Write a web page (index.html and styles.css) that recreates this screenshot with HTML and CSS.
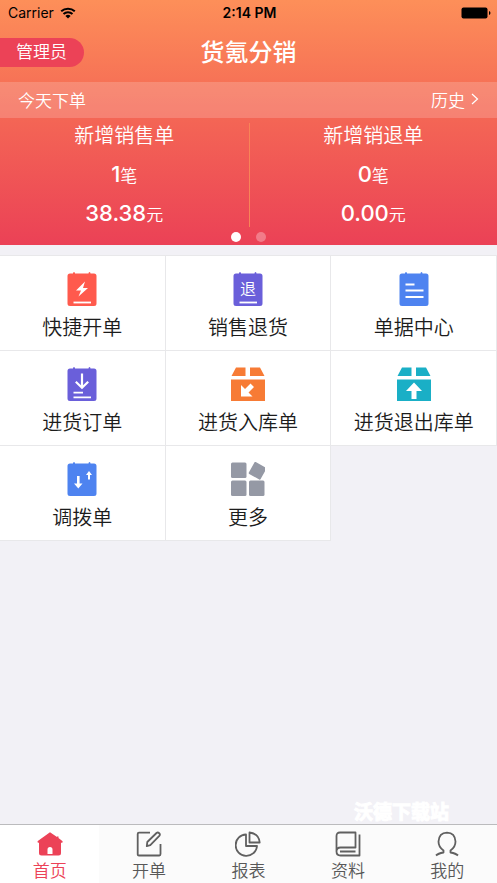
FILE: index.html
```html
<!DOCTYPE html>
<html lang="zh-CN">
<head>
<meta charset="utf-8">
<meta name="viewport" content="width=device-width, initial-scale=1">
<title>货氪分销</title>
<link rel="stylesheet" href="styles.css">
</head>
<body>
<header class="hero">
  <div class="status">
    <span class="carrier">Carrier
      <svg class="wifi" viewBox="0 0 16 12" aria-hidden="true"><path d="M1.2 4.3a10 10 0 0 1 13.6 0M3.5 6.900a6.600 6.600 0 0 1 9 0" fill="none" stroke="#000" stroke-width="2"/><path d="M8 11.500 5.400 8.900a3.800 3.800 0 0 1 5.200 0z"/></svg>
    </span>
    <span class="time">2:14 PM</span>
    <svg class="battery" viewBox="0 0 30 12" aria-hidden="true"><rect x="0.5" y="0.5" width="26" height="11" rx="2"/><path d="M28 4q1.500.5 1.500 2T28 8z"/></svg>
  </div>
  <div class="titlebar">
    <button class="role" type="button">管理员</button>
    <h1 class="title">货氪分销</h1>
  </div>
  <div class="strip">
    <span>今天下单</span>
    <a class="history" href="#history">历史
      <svg class="chevron" viewBox="0 0 8 12" aria-hidden="true"><path d="M1 1l5.500 5L1 11" fill="none" stroke="#fff" stroke-width="1.200"/></svg>
    </a>
  </div>
  <div class="stats">
    <section class="stat">
      <h2 class="stat-name">新增销售单</h2>
      <p class="stat-value"><strong>1</strong>笔</p>
      <p class="stat-value"><strong>38.38</strong>元</p>
    </section>
    <section class="stat">
      <h2 class="stat-name">新增销退单</h2>
      <p class="stat-value"><strong>0</strong>笔</p>
      <p class="stat-value"><strong>0.00</strong>元</p>
    </section>
  </div>
  <div class="pager">
    <button class="dot dot-on" type="button" aria-label="1"></button>
    <button class="dot" type="button" aria-label="2"></button>
  </div>
</header>

<main class="content">
  <nav class="tiles">
    <a class="tile" href="#quick">
      <svg class="icon" viewBox="0 0 34 34" aria-hidden="true"><path fill="#ff5a4d" d="M5 1.500h3q0-1.500 1-1.500t1 1.500h13.500q0-1.500 1-1.500t1 1.500H29q2.500 0 2.500 2.500v27.500Q31.500 34 29 34H5q-2.500 0-2.500-2.500V4Q2.500 1.500 5 1.500z"/><path fill="#fff" d="M20 9.500 11 18.500h5l-2.500 6L23 16h-5z"/><path d="M8.500 30.500h17.500" stroke="#fff" stroke-width="1.800"/></svg>
      <span>快捷开单</span>
    </a>
    <a class="tile" href="#return">
      <svg class="icon" viewBox="0 0 34 34" aria-hidden="true"><path fill="#6a5fda" d="M5 1.500h3q0-1.500 1-1.500t1 1.500h13.500q0-1.500 1-1.500t1 1.500H29q2.500 0 2.500 2.500v27.500Q31.500 34 29 34H5q-2.500 0-2.500-2.500V4Q2.500 1.500 5 1.500z"/><text class="glyph" x="17" y="23">退</text><path d="M8.500 30.500h17.500" stroke="#fff" stroke-width="1.800"/></svg>
      <span>销售退货</span>
    </a>
    <a class="tile" href="#documents">
      <svg class="icon" viewBox="0 0 34 34" aria-hidden="true"><path fill="#4e83f0" d="M5 1.500h3q0-1.500 1-1.500t1 1.500h13.500q0-1.500 1-1.500t1 1.500H29q2.500 0 2.500 2.500v27.500Q31.500 34 29 34H5q-2.500 0-2.500-2.500V4Q2.500 1.500 5 1.500z"/><path d="M8.500 12.500h9M8.500 18.500h18M8.500 25h18" stroke="#fff" stroke-width="1.800"/></svg>
      <span>单据中心</span>
    </a>
    <a class="tile" href="#purchase">
      <svg class="icon" viewBox="0 0 34 34" aria-hidden="true"><path fill="#6a5fda" d="M5 1.500h3q0-1.500 1-1.500t1 1.500h13.500q0-1.500 1-1.500t1 1.500H29q2.500 0 2.500 2.500v27.500Q31.500 34 29 34H5q-2.500 0-2.500-2.500V4Q2.500 1.500 5 1.500z"/><path d="M17 6.500v14.500M10.800 14.800l6.200 6 6.200-6" fill="none" stroke="#fff" stroke-width="2.200"/><path d="M8.500 25.700h9.500M8.500 30.300h17.500" stroke="#fff" stroke-width="1.800"/></svg>
      <span>进货订单</span>
    </a>
    <a class="tile" href="#inbound">
      <svg class="icon" viewBox="0 0 34 34" aria-hidden="true"><g fill="#f77b35"><path d="M5 0.500h9.500V9H.5zM19 0.500h10L33.500 9H19z"/><path d="M0 12.500h34V34H0z"/></g><path fill="#fff" d="M10 18v11.500h11.500l-4-4 5.500-5.500-3.500-3.500-5.500 5.500z"/></svg>
      <span>进货入库单</span>
    </a>
    <a class="tile" href="#outbound">
      <svg class="icon" viewBox="0 0 34 34" aria-hidden="true"><g fill="#1aafc6"><path d="M5 0.500h9.500V9H.5zM19 0.500h10L33.500 9H19z"/><path d="M0 12.500h34V34H0z"/></g><path fill="#fff" d="M17 15.500l8 8.500h-5.500v8h-5v-8H9z"/></svg>
      <span>进货退出库单</span>
    </a>
    <a class="tile" href="#transfer">
      <svg class="icon" viewBox="0 0 34 34" aria-hidden="true"><path fill="#4e83f0" d="M5 1.500h3q0-1.500 1-1.500t1 1.500h13.500q0-1.500 1-1.500t1 1.500H29q2.500 0 2.500 2.500v27.500Q31.500 34 29 34H5q-2.500 0-2.500-2.500V4Q2.500 1.500 5 1.500z"/><path fill="#fff" d="M12 14h2.600v7.500h2.900l-4.200 5L9 21.500h3zM24 9l3 4h-2v4.500h-2V13h-2z"/></svg>
      <span>调拨单</span>
    </a>
    <a class="tile" href="#more">
      <svg class="icon" viewBox="0 0 34 34" aria-hidden="true"><g fill="#9599a5"><rect x="0" y="0.500" width="15.500" height="15.500" rx="1.500"/><rect x="0" y="18.500" width="15.500" height="15.500" rx="1.500"/><rect x="18" y="18.500" width="15.500" height="15.500" rx="1.500"/><rect x="19.800" y="2" width="13.500" height="13.500" rx="1" transform="rotate(29 26.500 8.700)"/></g></svg>
      <span>更多</span>
    </a>
  </nav>
  <p class="mark">沃德下载站</p>
</main>

<nav class="tabs">
  <a class="tab tab-on" href="#home" aria-current="page">
    <svg class="tab-icon" viewBox="0 0 26 26" aria-hidden="true"><path fill="#ec4257" d="M13 1.200 .8 10q-.8 1.500.7 1.700H2V22q0 2.500 2.500 2.500h17Q24 24.500 24 22V11.700h.8q1.500-.2.500-1.700L21.500 7V5.500h-1.500v.5z"/><path fill="#fff" d="M10.500 23v-4.500a2.500 2.500 0 0 1 5 0V23z"/></svg>
    <span>首页</span>
  </a>
  <a class="tab" href="#order">
    <svg class="tab-icon line" viewBox="0 0 26 26" aria-hidden="true"><path d="M14 1.700H3Q1.700 1.700 1.700 3v20.500Q1.700 24.500 3 24.500h20.300Q24.500 24.500 24.500 23V13"/><path d="M10.800 15.200l.5-4.200 9.200-9q1.300-1 2.700.2 1.300 1.300.1 2.700l-9 9.300z"/></svg>
    <span>开单</span>
  </a>
  <a class="tab" href="#report">
    <svg class="tab-icon line" viewBox="0 0 26 26" aria-hidden="true"><path d="M11 3.500A10.700 10.700 0 1 0 22 15H11z"/><path d="M14.500 1.500v10h10.200Q24 2.500 14.500 1.500z"/></svg>
    <span>报表</span>
  </a>
  <a class="tab" href="#data">
    <svg class="tab-icon line" viewBox="0 0 26 26" aria-hidden="true"><path d="M5 1.500h15.500v15H5.500Q1.500 16.500 1.500 20.500V5q0-3.500 3.500-3.500zM1.500 20.500q0 4 4 4h19V3.500M5 20.500h15.500"/></svg>
    <span>资料</span>
  </a>
  <a class="tab" href="#mine">
    <svg class="tab-icon line" viewBox="0 0 26 26" aria-hidden="true"><path d="M2 24.500q2-2 7.500-3V19.500Q4.500 16 4.500 10.500 5 2 13 1.700q8 .3 8.500 8.800 0 5.500-5 9v2q5.500 1 7.500 3"/></svg>
    <span>我的</span>
  </a>
</nav>
</body>
</html>
```

FILE: styles.css
```css
* {
  box-sizing: border-box;
}

body {
  margin: 0;
  min-height: 100vh;
  display: flex;
  flex-direction: column;
  background: #f2f1f6;
  color: #1c1c1c;
  font-family: Inter, "Noto Sans CJK SC DemiLight", "Noto Sans CJK SC", sans-serif;
  font-weight: 350;
}

h1, h2, p {
  margin: 0;
  font-weight: inherit;
}

a {
  color: inherit;
  text-decoration: none;
}

button {
  border: 0;
  padding: 0;
  font: inherit;
  color: inherit;
}

svg {
  display: block;
}

.hero {
  color: #fff;
  background: linear-gradient(#fd8f59, #f46655 48%, #eb4156);
}

.status {
  display: grid;
  grid-template-columns: 1fr auto 1fr;
  align-items: center;
  height: 25px;
  padding: 0 6px 0 8px;
  color: #000;
  font-size: 14px;
  font-weight: 400;
}

.carrier {
  display: flex;
  align-items: center;
  gap: 6px;
}

.wifi {
  width: 16px;
  height: 12px;
}

.time {
  font-weight: 600;
}

.battery {
  width: 30px;
  height: 12px;
  justify-self: end;
}

.titlebar {
  display: grid;
  grid-template-columns: 1fr auto 1fr;
  align-items: center;
  height: 57px;
  padding-bottom: 6px;
}

.role {
  justify-self: start;
  height: 29px;
  margin-top: 4px;
  padding: 0 17px 0 16px;
  border-radius: 0 15px 15px 0;
  background: #ec4257;
  font-size: 17px;
  line-height: 29px;
}

.title {
  font-family: "Noto Sans CJK SC", sans-serif;
  font-size: 24px;
  font-weight: 500;
  line-height: 32px;
}

.strip {
  display: flex;
  align-items: center;
  justify-content: space-between;
  height: 36px;
  padding: 0 18px 2px;
  background: rgba(255, 255, 255, 0.18);
  font-size: 17px;
}

.history {
  display: flex;
  align-items: center;
  gap: 6px;
}

.chevron {
  width: 8px;
  height: 12px;
}

.stats {
  display: grid;
  grid-template-columns: 1fr 1fr;
  padding-top: 5px;
}

.stat {
  height: 104px;
  text-align: center;
}

.stat + .stat {
  border-left: 1px solid #f88457;
}

.stat-name {
  font-size: 20px;
  line-height: 26px;
  padding-bottom: 6px;
}

.stat-value {
  font-size: 17px;
  line-height: 39px;
  height: 39px;
}

.stat-value strong {
  font-size: 22px;
  font-weight: 500;
}

.pager {
  display: flex;
  justify-content: center;
  gap: 15px;
  padding: 5px 0 3px;
}

.dot {
  width: 10px;
  height: 10px;
  border-radius: 50%;
  background: rgba(255, 255, 255, 0.3);
}

.dot-on {
  background: #fff;
}

.content {
  flex: 1;
  display: flex;
  flex-direction: column;
  padding-top: 10px;
}

.tiles {
  display: grid;
  grid-template-columns: repeat(3, 1fr);
  border-top: 1px solid #e8e8ea;
}

.tile {
  display: flex;
  flex-direction: column;
  align-items: center;
  gap: 8px;
  height: 95px;
  padding-top: 16px;
  border-right: 1px solid #e8e8ea;
  border-bottom: 1px solid #e8e8ea;
  background: #fff;
  font-size: 20px;
  line-height: 28px;
}

.icon {
  width: 34px;
  height: 34px;
}

.glyph {
  fill: #fff;
  font-size: 16px;
  text-anchor: middle;
}

.mark {
  margin-top: auto;
  padding-right: 48px;
  color: #fff;
  font-family: "Noto Sans CJK SC", sans-serif;
  font-size: 19px;
  font-weight: 700;
  line-height: 26px;
  text-align: right;
  -webkit-text-stroke: 1px #fff;
}

.tabs {
  display: grid;
  grid-template-columns: repeat(5, 1fr);
  border-top: 1px solid #bbbbbd;
  background: #fbfbfb;
}

.tab {
  display: flex;
  flex-direction: column;
  align-items: center;
  gap: 2px;
  height: 58px;
  padding-top: 6px;
  color: #585858;
  font-size: 17px;
  line-height: 24px;
}

.tab-on {
  background: #fff;
  color: #ec4257;
}

.tab-icon {
  width: 26px;
  height: 26px;
}

.line {
  fill: none;
  stroke: #606060;
  stroke-width: 1.8;
  stroke-linejoin: round;
}
```
